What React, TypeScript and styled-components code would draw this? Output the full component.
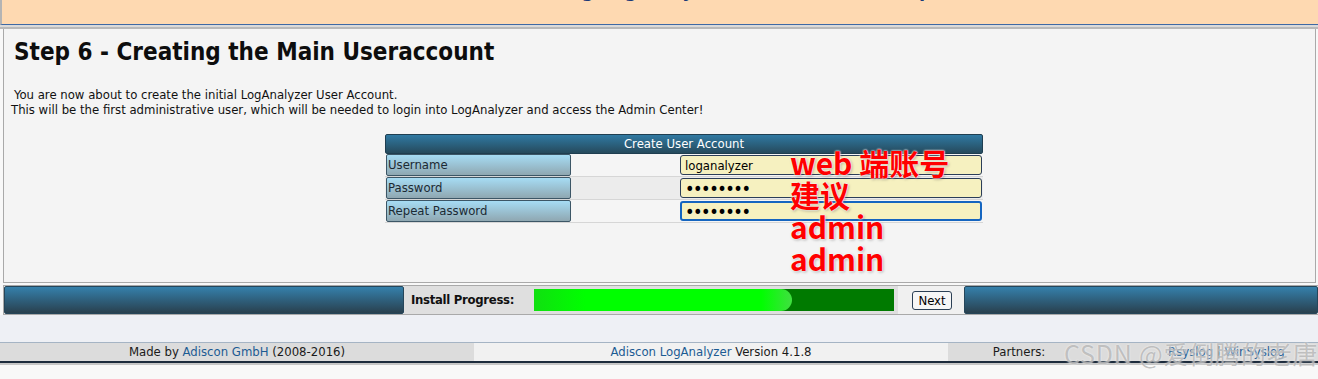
import React from "react";
import styled, { createGlobalStyle } from "styled-components";

const GlobalStyle = createGlobalStyle`
  body {
    margin: 0;
    background: #f8f8f8;
    font-family: "DejaVu Sans Condensed", "DejaVu Sans", sans-serif;
  }
`;

function App() {
  return (
    <Page>
      <GlobalStyle />
      <Banner>
        <BannerText>Installing LogAnalyzer Version 4.1.8 - Step 6</BannerText>
      </Banner>
      <BannerShadow />
      <Content>
        <Title>Step 6 - Creating the Main Useraccount</Title>
        <Intro>
          <IntroLine $indent={3}>You are now about to create the initial LogAnalyzer User Account.</IntroLine>
          <IntroLine $indent={0}>
            This will be the first administrative user, which will be needed to login into LogAnalyzer and access the Admin Center!
          </IntroLine>
        </Intro>
        <TableWrap>
          <Table>
            <TableHead>Create User Account</TableHead>
            <Row $alt={false}>
              <Label>Username</Label>
              <Input defaultValue="loganalyzer" />
            </Row>
            <Row $alt={true}>
              <Label>Password</Label>
              <Input type="password" defaultValue="password" $secret />
            </Row>
            <Row $alt={false}>
              <Label>Repeat Password</Label>
              <Input type="password" defaultValue="password" $secret $focus />
            </Row>
          </Table>
        </TableWrap>
      </Content>
      <ProgressRow>
        <BlueBar />
        <ProgressLabel>Install Progress:</ProgressLabel>
        <ProgressCell>
          <ProgressTrack>
            <ProgressFill />
          </ProgressTrack>
        </ProgressCell>
        <NextCell>
          <NextButton>Next</NextButton>
        </NextCell>
        <BlueBar />
      </ProgressRow>
      <Spacer />
      <Footer>
        <FooterCell $light={false}>
          Made by <Link>Adiscon GmbH</Link> (2008-2016)
        </FooterCell>
        <FooterCell $light={true}>
          <Link>Adiscon LogAnalyzer</Link> Version 4.1.8
        </FooterCell>
        <PartnerCell>
          <PartnerLabel>Partners:</PartnerLabel>
          <PartnerLinks>
            <Link>Rsyslog</Link> | <Link>WinSyslog</Link>
          </PartnerLinks>
        </PartnerCell>
      </Footer>
      <FooterLine />

      <Note>
        web 端账号
        <br />
        建议
        <br />
        admin
        <br />
        admin
      </Note>
      <Watermark>CSDN @爱倒腾的老唐</Watermark>
    </Page>
  );
}

const Page = styled.div`
  position: relative;
  width: 1318px;
  height: 379px;
  overflow: hidden;
  display: flex;
  flex-direction: column;
`;

const Banner = styled.div`
  height: 24px;
  background: #fed9b1;
  border-left: 2px solid #b4b4b4;
  border-bottom: 1px solid #3e69a4;
  overflow: hidden;
  display: flex;
  justify-content: center;
`;

const BannerText = styled.div`
  margin-top: -22px;
  margin-left: 130px;
  font-size: 20px;
  font-weight: bold;
  line-height: 24px;
  color: #1a3a78;
`;

const BannerShadow = styled.div`
  height: 4px;
  background: linear-gradient(#dadada 0 50%, #b9b9b9 50% 100%);
`;

const Content = styled.div`
  height: 254px;
  margin-left: 3px;
  margin-right: 2px;
  background: #f4f4f4;
  border: 1px solid #a9a9a9;
  border-top: none;
  box-sizing: border-box;
`;

const Title = styled.h1`
  margin: 6px 0 0 10px;
  font-size: 24px;
  line-height: 34px;
  font-weight: bold;
  color: #0d0d0d;
`;

const Intro = styled.div`
  margin-top: 18px;
  font-size: 13px;
  line-height: 15px;
  color: #111;
`;

const IntroLine = styled.div<{ $indent: number }>`
  padding-left: ${(p) => 7 + p.$indent}px;
`;

const TableWrap = styled.div`
  padding: 17px 0 0 381px;
`;

const Table = styled.div`
  width: 598px;
  display: flex;
  flex-direction: column;
`;

const TableHead = styled.div`
  height: 18px;
  background: linear-gradient(#3079a2, #264a5c);
  border: 1px solid #1f3e50;
  border-radius: 2px;
  color: #fff;
  font-size: 13px;
  line-height: 18px;
  text-align: center;
`;

const Row = styled.div<{ $alt: boolean }>`
  height: 23px;
  display: flex;
  align-items: center;
  justify-content: space-between;
  background: ${(p) => (p.$alt ? "#ececec" : "#f5f5f5")};
  border-bottom: 1px solid #d6d6d6;
  box-sizing: border-box;
`;

const Label = styled.div`
  width: 182px;
  height: 20px;
  margin-left: 1px;
  background: linear-gradient(#a6dcf4, #8fa7b1);
  border: 1px solid #3c5666;
  border-radius: 2px;
  font-size: 13px;
  line-height: 20px;
  padding-left: 1px;
  color: #1c2a33;
`;

const Input = styled.input<{ $focus?: boolean; $secret?: boolean }>`
  width: 302px;
  height: 20px;
  margin-right: 1px;
  box-sizing: border-box;
  background: #f6f1c0;
  border: ${(p) => (p.$focus ? "2px solid #1565c0" : "1px solid #2c3e58")};
  border-radius: 3px;
  padding: 0 ${(p) => (p.$focus ? 3 : 4)}px;
  font-family: "DejaVu Sans Condensed", "DejaVu Sans", sans-serif;
  font-size: ${(p) => (p.$secret ? 18 : 13)}px;
  letter-spacing: ${(p) => (p.$secret ? -1.5 : 0)}px;
  color: #000;
  outline: none;
`;

const ProgressRow = styled.div`
  margin: 2px 0 0 3px;
  height: 30px;
  display: grid;
  grid-template-columns: 400px 126px 368px 66px 1fr;
  border: 1px solid #a9a9a9;
  border-right: none;
  box-sizing: border-box;
  background: #f0f0f0;
`;

const BlueBar = styled.div`
  background: linear-gradient(#3580ab, #29404e);
  border: 1px solid #26465a;
  border-radius: 2px;
`;

const ProgressLabel = styled.div`
  background: #dfdfdf;
  font-size: 13px;
  font-weight: 600;
  letter-spacing: -0.3px;
  line-height: 28px;
  padding-left: 7px;
  color: #111;
`;

const ProgressCell = styled.div`
  background: #dfdfdf;
  padding: 3px 4px 3px 4px;
`;

const ProgressTrack = styled.div`
  height: 100%;
  background: #007a00;
  overflow: hidden;
`;

const ProgressFill = styled.div`
  width: 258px;
  height: 100%;
  border-radius: 0 12px 12px 0;
  background: linear-gradient(90deg, #10e010, #00ff00 20%, #00ff00 88%, #40e040);
`;

const NextCell = styled.div`
  display: flex;
  align-items: center;
  justify-content: center;
  padding-left: 2px;
`;

const NextButton = styled.button`
  width: 40px;
  height: 19px;
  padding: 0;
  background: #f6f6f6;
  border: 1px solid #2b3f55;
  border-radius: 3px;
  font-family: "DejaVu Sans Condensed", "DejaVu Sans", sans-serif;
  font-size: 13px;
  color: #000;
`;

const Spacer = styled.div`
  height: 27px;
  background: #eef0f5;
  border-bottom: 1px solid #a5b4c4;
`;

const Footer = styled.div`
  height: 18px;
  display: grid;
  grid-template-columns: 474px 474px 1fr;
  font-size: 13px;
  line-height: 18px;
  color: #1a1a1a;
`;

const FooterCell = styled.div<{ $light: boolean }>`
  background: ${(p) => (p.$light ? "#f1f1f1" : "#dcdcdc")};
  text-align: center;
`;

const PartnerCell = styled.div`
  background: #dcdcdc;
  display: flex;
`;

const PartnerLabel = styled.div`
  width: 142px;
  text-align: center;
`;

const PartnerLinks = styled.div`
  padding-left: 78px;
  color: #1a1a1a;
`;

const Link = styled.span`
  color: #1c5b93;
`;

const FooterLine = styled.div`
  height: 2px;
  background: #1c2b3c;
  border-bottom: 2px solid #c6c6c6;
`;

const Note = styled.div`
  position: absolute;
  left: 790px;
  top: 146px;
  font-family: "Noto Sans CJK SC", sans-serif;
  font-weight: bold;
  font-size: 30px;
  line-height: 32px;
  color: #ff0000;
  text-shadow: 0 0 2px #fff, 0 0 2px #fff, 1px 1px 3px rgba(0, 0, 0, 0.35);
`;

const Watermark = styled.div`
  position: absolute;
  left: 1064px;
  top: 335px;
  font-family: "Noto Sans CJK SC", sans-serif;
  font-size: 25px;
  letter-spacing: 0.8px;
  color: rgba(170, 170, 170, 0.7);
  text-shadow: 0 0 2px rgba(255, 255, 255, 0.8);
  white-space: nowrap;
`;

export default App;
